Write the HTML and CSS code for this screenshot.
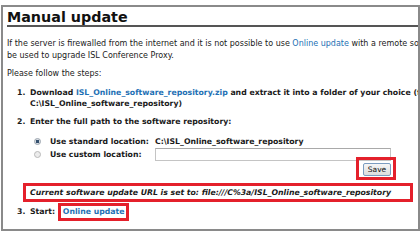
FILE: index.html
```html
<!DOCTYPE html>
<html>
<head>
<meta charset="utf-8">
<link rel="stylesheet" href="styles.css">
</head>
<body>
<div class="frame">
  <h1 class="title">Manual update</h1>
  <p class="intro">
    <span class="line">If the server is firewalled from the internet and it is not possible to use <a class="link" href="#">Online update</a> with a remote software repository, a manual update can</span>
    <span class="line">be used to upgrade ISL Conference Proxy.</span>
  </p>
  <p class="lead">Please follow the steps:</p>
  <div class="step step-1">
    <span class="num">1.</span>
    <div class="body">
      <span class="line">Download <a class="link" href="#">ISL_Online_software_repository.zip</a> and extract it into a folder of your choice (for example</span>
      <span class="line">C:\ISL_Online_software_repository)</span>
    </div>
  </div>
  <div class="step step-2">
    <span class="num">2.</span>
    <div class="body">
      <span class="line">Enter the full path to the software repository:</span>
    </div>
  </div>
  <div class="options">
    <span class="radio checked"></span>
    <span class="opt-label">Use standard location:</span>
    <span class="opt-value">C:\ISL_Online_software_repository</span>
    <span class="radio"></span>
    <span class="opt-label">Use custom location:</span>
    <span class="opt-value"><span class="field"></span></span>
  </div>
  <div class="save-row">
    <span class="save-mark"><span class="btn">Save</span></span>
  </div>
  <div class="current">Current software update URL is set to: file:///C%3a/ISL_Online_software_repository</div>
  <div class="step step-3">
    <span class="num">3.</span>
    <div class="body">
      <span class="line">Start: <a class="link start-link" href="#">Online update</a></span>
    </div>
  </div>
</div>
</body>
</html>
```

FILE: styles.css
```css
html, body {
  margin: 0;
  padding: 0;
  background: #ffffff;
}
body {
  font-family: "DejaVu Sans", Verdana, sans-serif;
  font-size: 8px;
  line-height: 12px;
  color: #1a1a1a;
}
.frame {
  box-sizing: border-box;
  width: 419px;
  height: 226px;
  margin: 5px 0 0 1px;
  border: 2px solid #8a8a8a;
  padding: 0 0 0 4px;
  overflow: hidden;
}
.title {
  margin: 0;
  padding-top: 2px;
  font-size: 14.3px;
  line-height: 16px;
  font-weight: bold;
  color: #111;
  border-bottom: 2px solid #555555;
}
.line {
  display: block;
  white-space: nowrap;
}
.intro {
  margin: 11px 0 0 0;
}
.lead {
  margin: 6px 0 0 0;
}
.link {
  color: #1e70b4;
  text-decoration: none;
}
.step {
  display: flex;
  font-weight: bold;
  font-size: 7.75px;
  padding-left: 10px;
}
.num {
  width: 13px;
  flex: none;
}
.step-1 {
  margin-top: 7px;
  line-height: 11px;
}
.step-2 {
  margin-top: 7px;
}
.options {
  margin: 7px 0 0 27px;
  display: grid;
  grid-template-columns: 16px 105px 236px;
  grid-auto-rows: 13px;
  align-items: center;
  font-weight: bold;
  font-size: 7.75px;
}
.radio {
  box-sizing: border-box;
  width: 7px;
  height: 7px;
  border-radius: 50%;
  border: 1px solid #b9b9b9;
  background: #ececec;
}
.radio.checked {
  background: radial-gradient(circle, #34506e 0 1.6px, #d8dde3 2px);
  border-color: #9aa3ad;
}
.field {
  display: block;
  box-sizing: border-box;
  width: 236px;
  height: 13px;
  border: 1px solid #c4c4c4;
  border-top-color: #a9a9a9;
  background: #fff;
}
.save-row {
  margin: -4px 0 0 27px;
  width: 362px;
  display: flex;
  justify-content: flex-end;
}
.save-mark {
  display: block;
  border: 3px solid #e4202b;
  padding: 3px 2px 1px 4px;
}
.btn {
  display: block;
  box-sizing: border-box;
  width: 28px;
  height: 13px;
  border: 1px solid #7a9cc0;
  border-radius: 2px;
  background: linear-gradient(#f6f6f6, #dcdcdc);
  font-size: 7.5px;
  line-height: 11px;
  text-align: center;
  color: #111;
}
.current {
  box-sizing: border-box;
  margin: 3px 5px 0 16px;
  height: 19px;
  border: 3px solid #e4202b;
  padding-left: 4px;
  font-weight: bold;
  font-style: italic;
  font-size: 7.75px;
  line-height: 13px;
  white-space: nowrap;
}
.step-3 {
  margin-top: 1px;
  line-height: 18px;
}
.start-link {
  display: inline-block;
  border: 3px solid #e4202b;
  padding: 0 1px 0 2px;
  line-height: 12px;
  vertical-align: top;
}
```
